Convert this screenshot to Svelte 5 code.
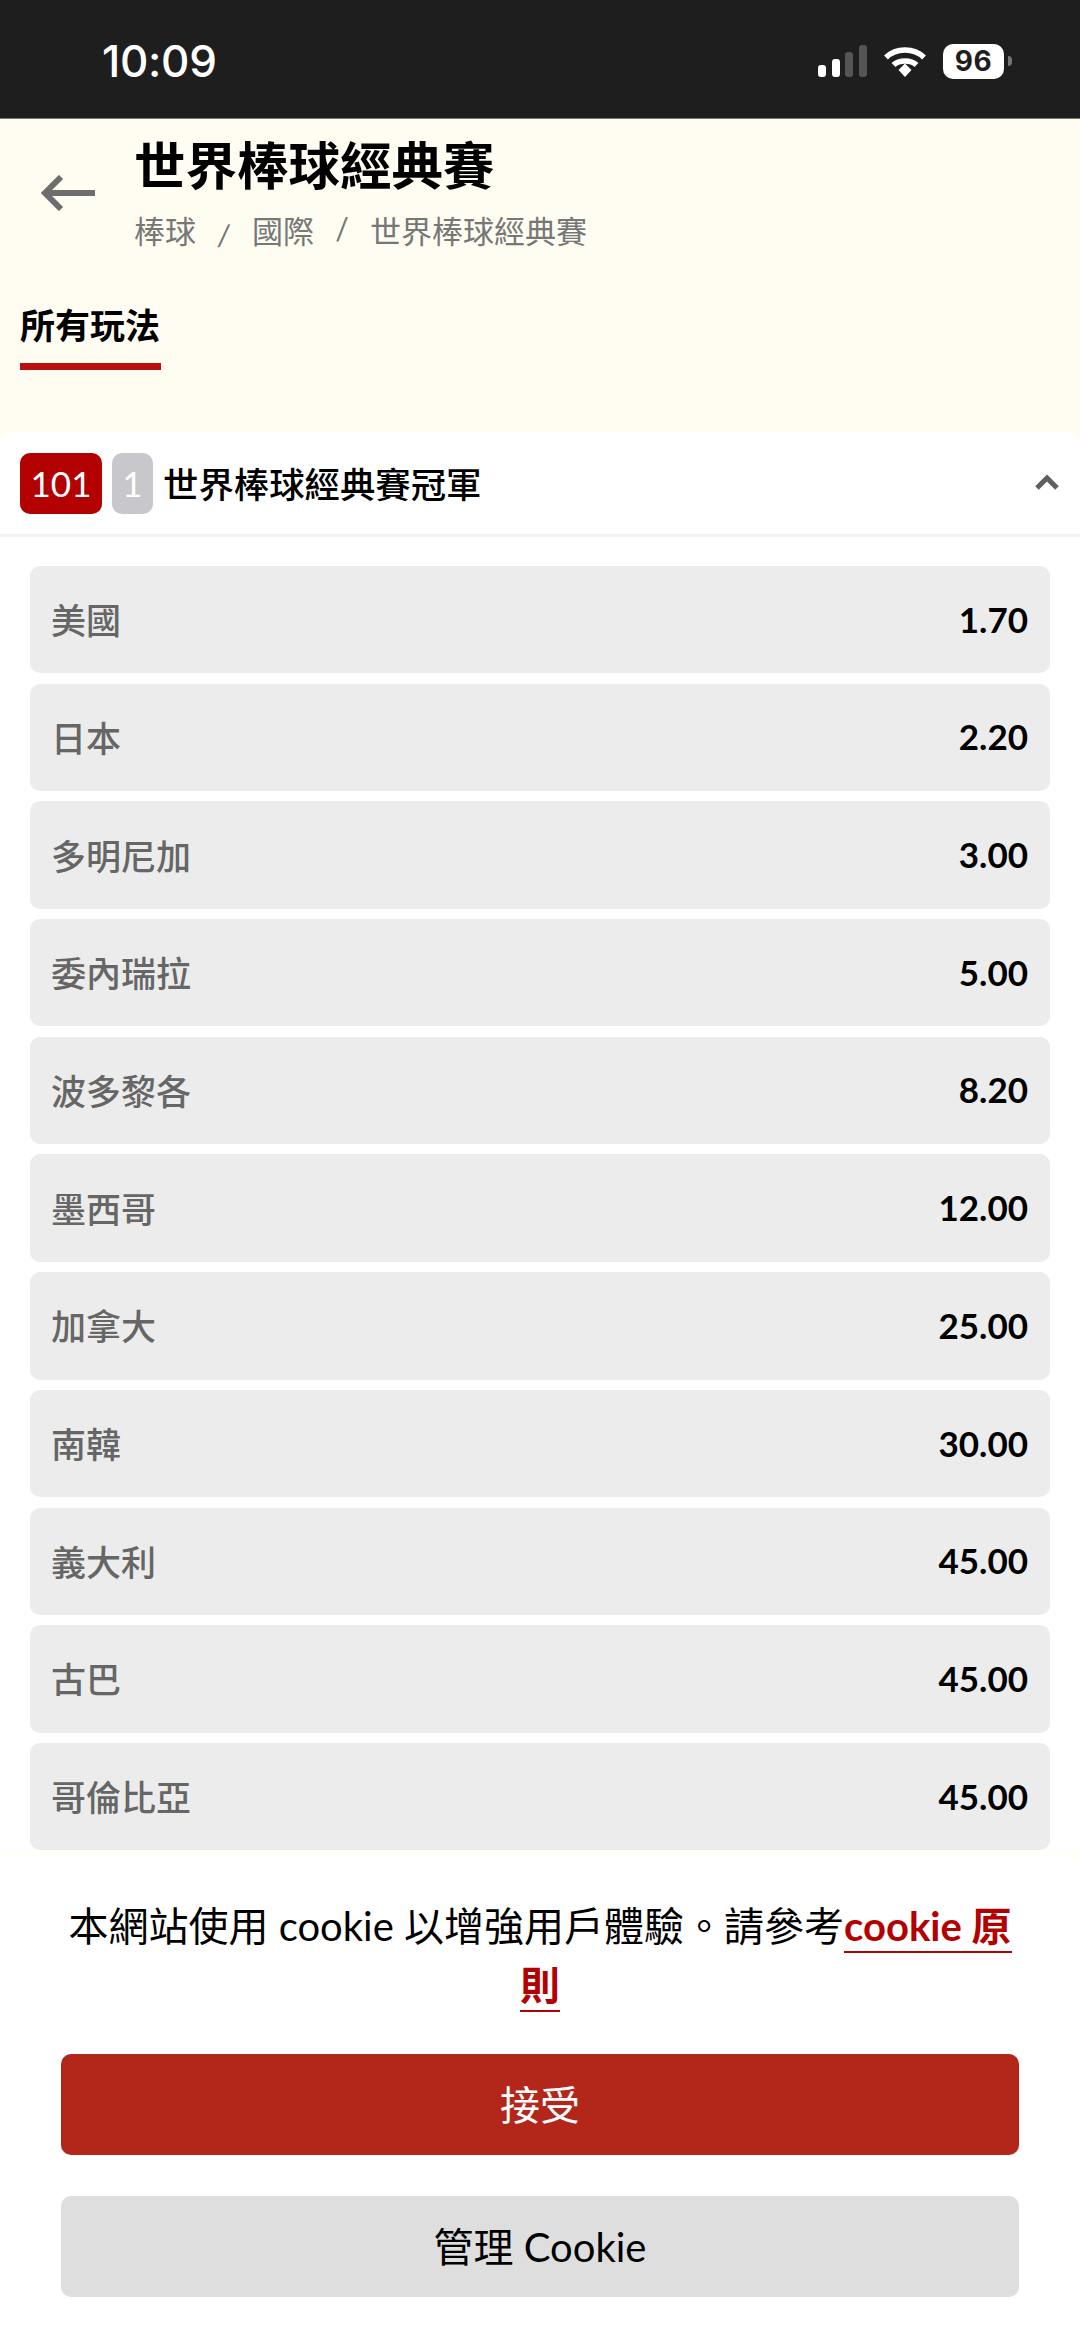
<script>
  const rows = [
    ['美國', '1.70'], ['日本', '2.20'], ['多明尼加', '3.00'], ['委內瑞拉', '5.00'],
    ['波多黎各', '8.20'], ['墨西哥', '12.00'], ['加拿大', '25.00'], ['南韓', '30.00'],
    ['義大利', '45.00'], ['古巴', '45.00'], ['哥倫比亞', '45.00']
  ];
</script>

<div class="page">
  <div class="status">
    <span class="time">10:09</span>
    <div class="sys">
      <div class="signal">
        <i class="b1"></i><i class="b2"></i><i class="b3"></i><i class="b4"></i>
      </div>
      <svg class="wifi" width="44" height="33" viewBox="0 0 44 33" fill="none" stroke="#fff" stroke-width="5.5">
        <path d="M3 12.5 C13 2.5 31 2.5 41 12.5" />
        <path d="M10.5 20 C16 14.5 28 14.5 33.5 20" />
        <path d="M15.5 25 L22 18.5 L28.5 25 L22 32 Z" fill="#fff" stroke="none" />
      </svg>
      <div class="battery"><span>96</span></div>
      <div class="tip"></div>
    </div>
  </div>

  <header class="head">
    <div class="title-row">
      <svg class="back" width="54" height="36" viewBox="0 0 54 36" fill="none" stroke="#6e6e6e" stroke-width="6">
        <path d="M54 18 H4 M20 2 L4 18 L20 34" />
      </svg>
      <div class="titles">
        <h1>世界棒球經典賽</h1>
        <div class="crumbs">
          <span>棒球</span><em class="s1">/</em><span>國際</span><em class="s2">/</em><span>世界棒球經典賽</span>
        </div>
      </div>
    </div>
    <div class="tab">所有玩法</div>
  </header>

  <section class="market">
    <div class="head-wrap">
      <div class="market-head">
        <span class="badge red">101</span>
        <span class="badge grey">1</span>
        <span class="mname">世界棒球經典賽冠軍</span>
        <svg class="chev" width="24" height="16" viewBox="0 0 24 16" fill="none" stroke="#5f5f5f" stroke-width="5">
          <path d="M2 14 L12 4 L22 14" />
        </svg>
      </div>
    </div>
    <div class="rows">
      {#each rows as [name, odds]}
        <div class="row"><span class="name">{name}</span><span class="odds">{odds}</span></div>
      {/each}
    </div>
  </section>

  <div class="cookie-wrap">
    <div class="cookie">
      <p>本網站使用 cookie 以增強用戶體驗。請參考<a href="#policy">cookie 原則</a></p>
      <button class="accept"><span>接受</span></button>
      <button class="manage"><span>管理 Cookie</span></button>
    </div>
  </div>
</div>

<style>
  :global(body) { margin: 0; background: #fff; }
  .page {
    width: 1080px; height: 2337px; overflow: hidden; display: flex; flex-direction: column;
    font-family: Lato, "Noto Sans CJK TC", sans-serif; background: #fff; color: #000;
  }
  .status {
    height: 119px; flex: none; background: #1e1e1e; display: flex; align-items: center;
    justify-content: space-between; padding: 4px 68px 0 102px; box-sizing: border-box;
    border-bottom: 1px solid #77776f;
  }
  .time { font: 500 44px Inter, sans-serif; color: #fff; letter-spacing: -0.3px; }
  .sys { display: flex; align-items: center; }
  .signal { display: flex; align-items: flex-end; gap: 5.6px; height: 32px; margin-right: 16px; }
  .signal i { display: block; width: 8px; border-radius: 3px; background: #fff; }
  .b1 { height: 12px; }
  .b2 { height: 18px; }
  .signal .b3 { height: 25px; background: #555; }
  .signal .b4 { height: 32px; background: #555; }
  .battery {
    width: 61px; height: 35px; margin-left: 16px; background: #fff; border-radius: 10px;
    display: flex; align-items: center; justify-content: center;
  }
  .battery span { font: 700 28px Inter, sans-serif; color: #1e1e1e; letter-spacing: 0.5px; }
  .tip { width: 4px; height: 10px; margin-left: 4px; background: #777; border-radius: 0 5px 5px 0; }

  .head { height: 313px; flex: none; background: #fffdf2; box-sizing: border-box; padding-top: 9px; }
  .title-row { display: flex; align-items: flex-start; padding-left: 41px; }
  .back { margin: 47px 39px 0 0; flex: none; }
  h1 { margin: 0; font-size: 51.5px; line-height: 74px; font-weight: 700; }
  .crumbs { display: flex; align-items: center; margin-top: 7px; font-size: 31px; line-height: 44px; color: #777; }
  .crumbs em { font-style: normal; font-size: 30px; width: 56px; text-align: center; }
  .crumbs .s1 { transform: translateY(3px) rotate(3deg); }
  .crumbs .s2 { width: 56px; transform: translateY(-3px); }
  .tab {
    margin: 42px 0 0 20px; width: 141px; font-size: 35px; font-weight: 700; line-height: 60px;
    height: 68px; border-bottom: 7px solid #b80f0f; white-space: nowrap; color: #000;
  }

  .market { flex: none; }
  .head-wrap { background: #fffdf2; }
  .market-head {
    height: 100px; display: flex; align-items: center; box-sizing: content-box;
    padding: 0 20px 2px; border-bottom: 3px solid #f2f2f7; background: #fff;
    border-radius: 10px 10px 0 0;
  }
  .badge {
    height: 61px; border-radius: 10px; display: flex; align-items: center; justify-content: center;
    color: #fff; font-size: 35px; margin-top: 2px;
  }
  .red { width: 82px; background: #b30000; }
  .grey { width: 41px; margin-left: 10px; background: #c7c7cc; }
  .mname { margin-left: 10px; font-size: 35.4px; font-weight: 500; flex: 1; }
  .chev { margin-right: 1px; }
  .rows { display: flex; flex-direction: column; gap: 10.3px; padding: 29px 30px 0; }
  .row {
    height: 107.4px; background: #ececec; border-radius: 10px; display: flex; align-items: center;
    justify-content: space-between; padding: 0 22px 2px 21px; box-sizing: border-box;
  }
  .name { font-size: 35px; font-weight: 500; color: #666; }
  .odds { font-size: 35px; font-weight: 700; color: #000; }

  .cookie-wrap { flex: 1; display: flex; padding-top: 5px; background: linear-gradient(#fffef8 0 14px, #fff 14px); }
  .cookie { flex: 1; background: #fff; border-radius: 10px 10px 0 0; padding: 42px 61px 0; box-sizing: border-box; }
  .cookie p { margin: 0 0 39px; text-align: center; font-size: 40px; line-height: 59px; }
  .cookie a { color: #b30000; font-weight: 700; text-decoration: none; border-bottom: 2px solid #b30000; padding-bottom: 1px; }
  button {
    display: block; width: 958px; height: 101px; border: 0; border-radius: 10px; font: inherit;
    font-size: 40px; text-align: center; padding: 0 0 3px;
  }
  .accept { background: #b3261a; color: #fff; }
  .manage { margin-top: 41px; background: #dedede; color: #000; }
</style>
